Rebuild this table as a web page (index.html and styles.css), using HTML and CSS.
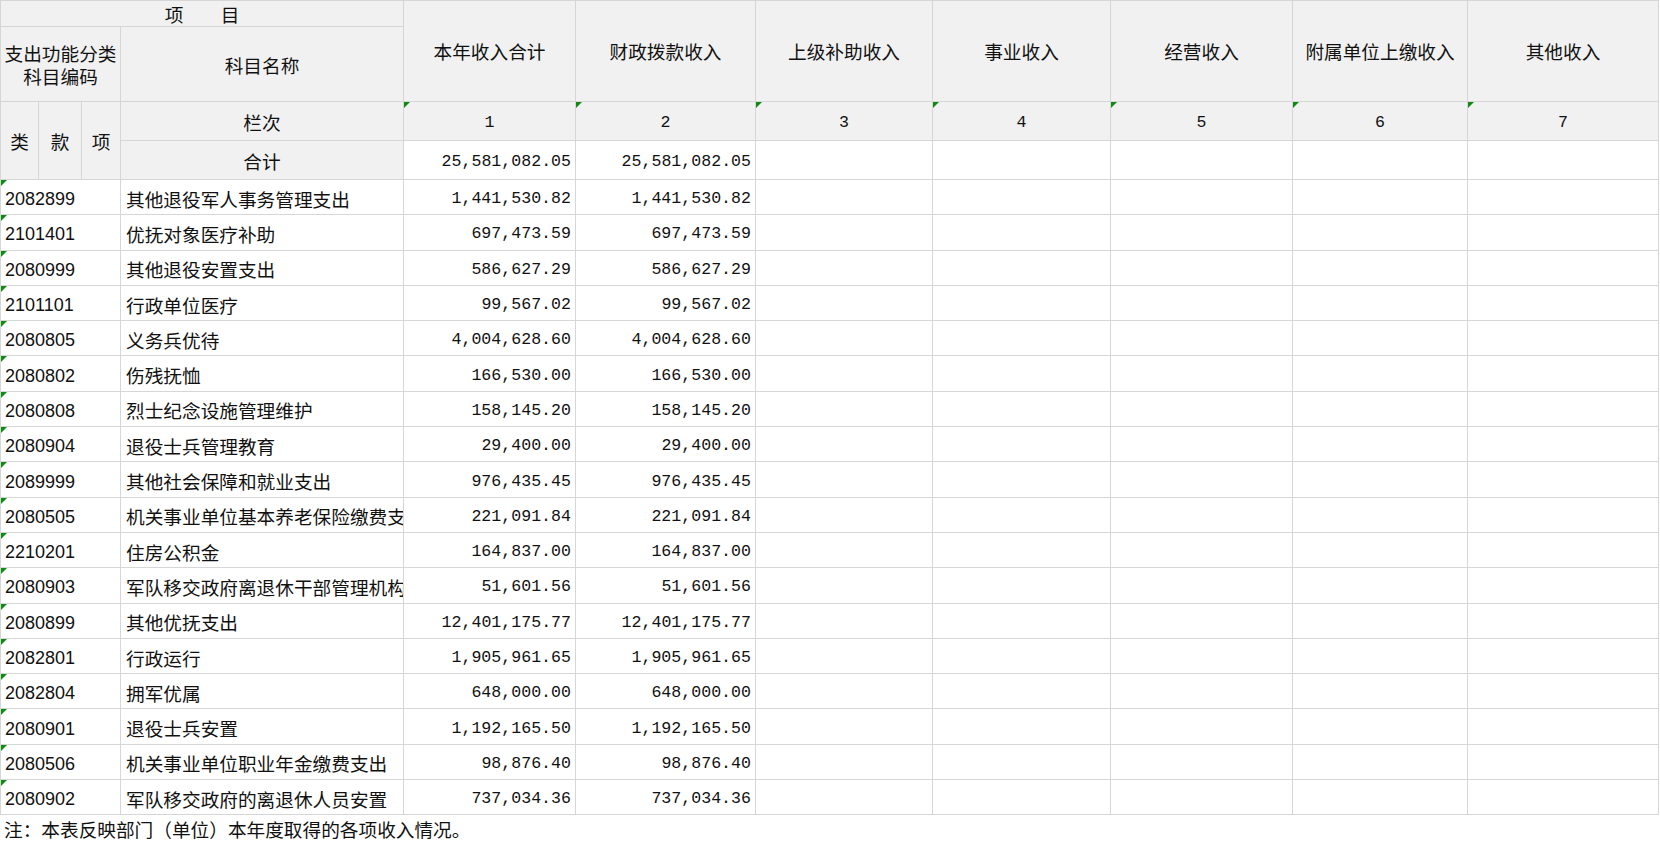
FILE: index.html
```html
<!DOCTYPE html>
<html lang="zh-CN">
<head>
<meta charset="utf-8">
<title>收入决算表</title>
<link rel="stylesheet" href="styles.css">
</head>
<body>
<table class="sheet">
  <colgroup>
    <col class="c-lei"><col class="c-kuan"><col class="c-xiang"><col class="c-name">
    <col class="c-a1"><col class="c-a2"><col class="c-a3"><col class="c-a4"><col class="c-a5"><col class="c-a6"><col class="c-a7">
  </colgroup>
  <tr class="r-top">
    <td class="hd" colspan="4">项　　目</td>
    <td class="hd" rowspan="2">本年收入合计</td>
    <td class="hd" rowspan="2">财政拨款收入</td>
    <td class="hd" rowspan="2">上级补助收入</td>
    <td class="hd" rowspan="2">事业收入</td>
    <td class="hd" rowspan="2">经营收入</td>
    <td class="hd" rowspan="2">附属单位上缴收入</td>
    <td class="hd" rowspan="2">其他收入</td>
  </tr>
  <tr class="r-head">
    <td class="hd wrap" colspan="3"><span class="ln">支出功能分类</span><span class="ln">科目编码</span></td>
    <td class="hd">科目名称</td>
  </tr>
  <tr class="r-idx">
    <td class="hd" rowspan="2">类</td>
    <td class="hd" rowspan="2">款</td>
    <td class="hd" rowspan="2">项</td>
    <td class="hd">栏次</td>
    <td class="hd num flag">1</td>
    <td class="hd num flag">2</td>
    <td class="hd num flag">3</td>
    <td class="hd num flag">4</td>
    <td class="hd num flag">5</td>
    <td class="hd num flag">6</td>
    <td class="hd num flag">7</td>
  </tr>
  <tr class="r-total">
    <td class="hd">合计</td>
    <td class="amt">25,581,082.05</td>
    <td class="amt">25,581,082.05</td>
    <td></td><td></td><td></td><td></td><td></td>
  </tr>
  <tr class="r-data"><td class="code flag" colspan="3">2082899</td><td class="name">其他退役军人事务管理支出</td><td class="amt">1,441,530.82</td><td class="amt">1,441,530.82</td><td></td><td></td><td></td><td></td><td></td></tr>
  <tr class="r-data"><td class="code flag" colspan="3">2101401</td><td class="name">优抚对象医疗补助</td><td class="amt">697,473.59</td><td class="amt">697,473.59</td><td></td><td></td><td></td><td></td><td></td></tr>
  <tr class="r-data"><td class="code flag" colspan="3">2080999</td><td class="name">其他退役安置支出</td><td class="amt">586,627.29</td><td class="amt">586,627.29</td><td></td><td></td><td></td><td></td><td></td></tr>
  <tr class="r-data"><td class="code flag" colspan="3">2101101</td><td class="name">行政单位医疗</td><td class="amt">99,567.02</td><td class="amt">99,567.02</td><td></td><td></td><td></td><td></td><td></td></tr>
  <tr class="r-data"><td class="code flag" colspan="3">2080805</td><td class="name">义务兵优待</td><td class="amt">4,004,628.60</td><td class="amt">4,004,628.60</td><td></td><td></td><td></td><td></td><td></td></tr>
  <tr class="r-data"><td class="code flag" colspan="3">2080802</td><td class="name">伤残抚恤</td><td class="amt">166,530.00</td><td class="amt">166,530.00</td><td></td><td></td><td></td><td></td><td></td></tr>
  <tr class="r-data"><td class="code flag" colspan="3">2080808</td><td class="name">烈士纪念设施管理维护</td><td class="amt">158,145.20</td><td class="amt">158,145.20</td><td></td><td></td><td></td><td></td><td></td></tr>
  <tr class="r-data"><td class="code flag" colspan="3">2080904</td><td class="name">退役士兵管理教育</td><td class="amt">29,400.00</td><td class="amt">29,400.00</td><td></td><td></td><td></td><td></td><td></td></tr>
  <tr class="r-data"><td class="code flag" colspan="3">2089999</td><td class="name">其他社会保障和就业支出</td><td class="amt">976,435.45</td><td class="amt">976,435.45</td><td></td><td></td><td></td><td></td><td></td></tr>
  <tr class="r-data"><td class="code flag" colspan="3">2080505</td><td class="name">机关事业单位基本养老保险缴费支出</td><td class="amt">221,091.84</td><td class="amt">221,091.84</td><td></td><td></td><td></td><td></td><td></td></tr>
  <tr class="r-data"><td class="code flag" colspan="3">2210201</td><td class="name">住房公积金</td><td class="amt">164,837.00</td><td class="amt">164,837.00</td><td></td><td></td><td></td><td></td><td></td></tr>
  <tr class="r-data"><td class="code flag" colspan="3">2080903</td><td class="name">军队移交政府离退休干部管理机构</td><td class="amt">51,601.56</td><td class="amt">51,601.56</td><td></td><td></td><td></td><td></td><td></td></tr>
  <tr class="r-data"><td class="code flag" colspan="3">2080899</td><td class="name">其他优抚支出</td><td class="amt">12,401,175.77</td><td class="amt">12,401,175.77</td><td></td><td></td><td></td><td></td><td></td></tr>
  <tr class="r-data"><td class="code flag" colspan="3">2082801</td><td class="name">行政运行</td><td class="amt">1,905,961.65</td><td class="amt">1,905,961.65</td><td></td><td></td><td></td><td></td><td></td></tr>
  <tr class="r-data"><td class="code flag" colspan="3">2082804</td><td class="name">拥军优属</td><td class="amt">648,000.00</td><td class="amt">648,000.00</td><td></td><td></td><td></td><td></td><td></td></tr>
  <tr class="r-data"><td class="code flag" colspan="3">2080901</td><td class="name">退役士兵安置</td><td class="amt">1,192,165.50</td><td class="amt">1,192,165.50</td><td></td><td></td><td></td><td></td><td></td></tr>
  <tr class="r-data"><td class="code flag" colspan="3">2080506</td><td class="name">机关事业单位职业年金缴费支出</td><td class="amt">98,876.40</td><td class="amt">98,876.40</td><td></td><td></td><td></td><td></td><td></td></tr>
  <tr class="r-data"><td class="code flag" colspan="3">2080902</td><td class="name">军队移交政府的离退休人员安置</td><td class="amt">737,034.36</td><td class="amt">737,034.36</td><td></td><td></td><td></td><td></td><td></td></tr>
</table>
<p class="note">注：本表反映部门（单位）本年度取得的各项收入情况。</p>
</body>
</html>
```

FILE: styles.css
```css
html, body {
  margin: 0;
  padding: 0;
  background: #ffffff;
}

body {
  width: 1660px;
  height: 847px;
  overflow: hidden;
  font-family: "Noto Sans CJK SC", "Liberation Sans", sans-serif;
  font-size: 18.67px;
  color: #111111;
}

.sheet {
  border-collapse: collapse;
  table-layout: fixed;
  width: 1658px;
}

.c-lei { width: 38px; }
.c-kuan { width: 43px; }
.c-xiang { width: 39px; }
.c-name { width: 283px; }
.c-a1 { width: 172px; }
.c-a2 { width: 180px; }
.c-a3 { width: 177px; }
.c-a4 { width: 178px; }
.c-a5 { width: 182px; }
.c-a6 { width: 175px; }
.c-a7 { width: 191px; }

.sheet td {
  border: 1px solid #d6d6d6;
  padding: 4px 4px 0 4px;
  line-height: 20px;
  white-space: nowrap;
  overflow: hidden;
  vertical-align: middle;
  position: relative;
  background: #ffffff;
}

.r-top { height: 26px; }
.r-head { height: 75px; }
.r-idx { height: 39px; }
.r-total { height: 39px; }
.r-data { height: 35.3px; }

.sheet td.hd {
  background: #f1f1f1;
  text-align: center;
  padding: 1px 0 0 0;
}

.r-top td.hd { padding-top: 0; }

.sheet td.wrap {
  padding-top: 0;
}

.ln {
  display: block;
  line-height: 23px;
}

.sheet td.num {
  font-family: "Liberation Mono", "DejaVu Sans Mono", monospace;
  font-size: 16.6px;
  padding-top: 4px;
}

.sheet td.code {
  font-family: "Liberation Sans", Arial, sans-serif;
  font-size: 18px;
  text-align: left;
  padding-left: 4px;
}

.sheet td.name {
  text-align: left;
  padding: 3px 0 0 5px;
  text-overflow: clip;
}

.sheet td.amt {
  font-family: "Liberation Mono", "DejaVu Sans Mono", monospace;
  font-size: 16.6px;
  text-align: right;
  padding-right: 4px;
}

.flag::before {
  content: "";
  position: absolute;
  left: 0;
  top: 0;
  width: 0;
  height: 0;
  border-top: 6px solid #108a10;
  border-right: 6px solid transparent;
}

.note {
  margin: 0;
  padding: 3px 0 0 4px;
  line-height: 22px;
  font-size: 18.67px;
}
```
